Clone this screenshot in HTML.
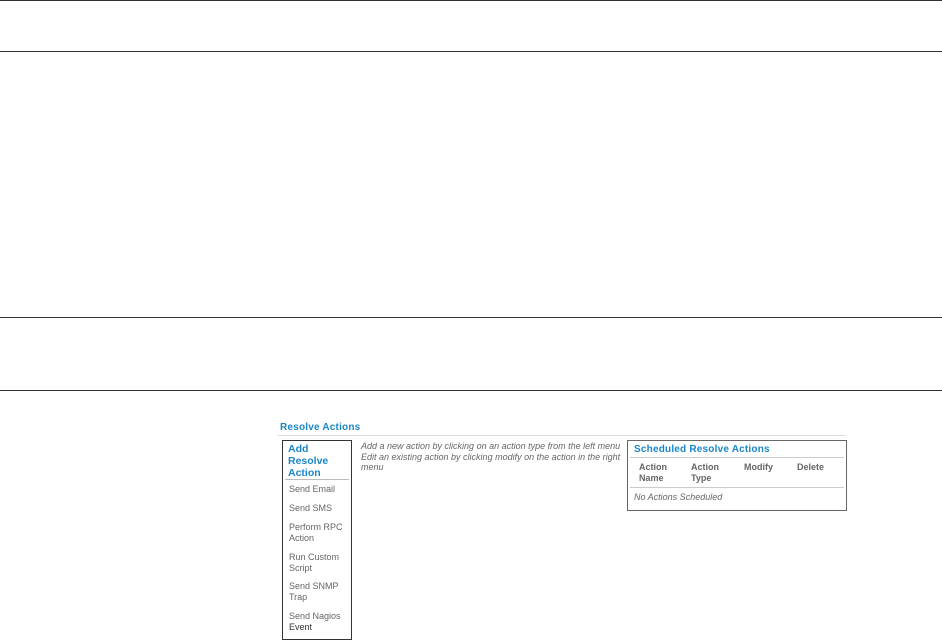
<!DOCTYPE html>
<html><head><style>
body{margin:0;width:942px;height:641px;background:#fff;position:relative;overflow:hidden;font-family:"Liberation Sans",Arial,sans-serif}
.a{position:absolute}
.hl{position:absolute;left:0;width:942px;height:1px;background:#333}
.blue{color:#1a86c8;font-weight:bold}
.g{color:#666;font-size:9px;line-height:10.5px}
</style></head><body>
<div class="hl" style="top:0"></div>
<div class="hl" style="top:51px"></div>
<div class="hl" style="top:317px"></div>
<div class="hl" style="top:390px"></div>

<div class="a blue" style="left:280px;top:422px;font-size:10px;letter-spacing:0.2px">Resolve Actions</div>
<div class="a" style="left:278px;top:435px;width:568px;height:1px;background:#ddd"></div>

<div class="a" style="left:282px;top:440px;width:68px;height:198px;border:1px solid #333"></div>
<div class="a blue" style="left:288px;top:443px;font-size:10.5px;line-height:12px">Add<br>Resolve<br>Action</div>
<div class="a" style="left:285px;top:479px;width:64px;height:1px;background:#bbb"></div>
<div class="a g" style="left:289px;top:484px">Send Email</div>
<div class="a g" style="left:289px;top:503px">Send SMS</div>
<div class="a g" style="left:289px;top:522px">Perform RPC<br>Action</div>
<div class="a g" style="left:289px;top:552px">Run Custom<br>Script</div>
<div class="a g" style="left:289px;top:581px">Send SNMP<br>Trap</div>
<div class="a g" style="left:289px;top:611px">Send Nagios<br><span style="color:#333">Event</span></div>

<div class="a g" style="left:361px;top:441px;font-style:italic">Add a new action by clicking on an action type from the left menu<br>Edit an existing action by clicking modify on the action in the right<br>menu</div>

<div class="a" style="left:627px;top:440px;width:218px;height:69px;border:1px solid #666"></div>
<div class="a blue" style="left:634px;top:444px;font-size:10px;letter-spacing:0.2px">Scheduled Resolve Actions</div>
<div class="a" style="left:630px;top:457px;width:214px;height:1px;background:#ccc"></div>
<div class="a g" style="left:639px;top:462px;font-weight:bold">Action<br>Name</div>
<div class="a g" style="left:691px;top:462px;font-weight:bold">Action<br>Type</div>
<div class="a g" style="left:744px;top:462px;font-weight:bold">Modify</div>
<div class="a g" style="left:797px;top:462px;font-weight:bold">Delete</div>
<div class="a" style="left:630px;top:487px;width:214px;height:1px;background:#ccc"></div>
<div class="a g" style="left:634px;top:492px;font-style:italic">No Actions Scheduled</div>
</body></html>
